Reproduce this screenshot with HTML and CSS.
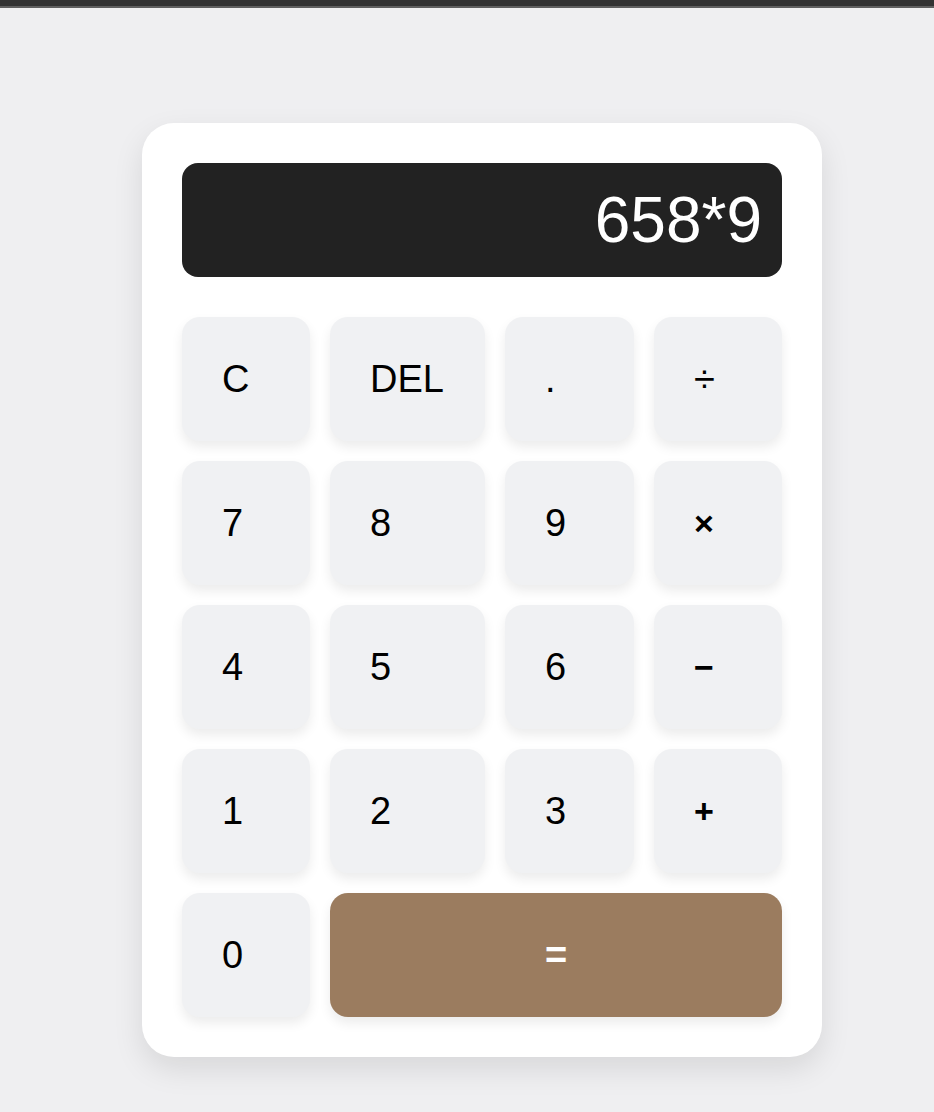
FILE: index.html
```html
<!DOCTYPE html>
<html lang="en">
<head>
    <meta charset="UTF-8">
    <meta name="viewport" content="width=device-width, initial-scale=1.0">
    <title>Calculator</title>
    <link rel="stylesheet" href="styles.css">
</head>
<body>
    <div class="topbar"></div>
    <main class="page">
        <div class="calculator">
            <div class="display" id="display">658*9</div>
            <div class="keys">
                <button class="key">C</button>
                <button class="key">DEL</button>
                <button class="key">.</button>
                <button class="key">÷</button>

                <button class="key">7</button>
                <button class="key">8</button>
                <button class="key">9</button>
                <button class="key op">×</button>

                <button class="key">4</button>
                <button class="key">5</button>
                <button class="key">6</button>
                <button class="key op">−</button>

                <button class="key">1</button>
                <button class="key">2</button>
                <button class="key">3</button>
                <button class="key op">+</button>

                <button class="key">0</button>
                <button class="key equals">=</button>
            </div>
        </div>
    </main>
</body>
</html>
```

FILE: styles.css
```css
* {
    box-sizing: border-box;
}
body {
    font-family: "Liberation Sans", Arial, sans-serif;
    margin: 0;
    padding: 0;
    background-color: #efeff1;
    min-height: 1112px;
}
.topbar {
    height: 8px;
    background: #333;
    border-bottom: 2px solid #606060;
}
.page {
    padding: 115px 0 0 142px;
}
.calculator {
    width: 680px;
    padding: 40px;
    background: #fff;
    border-radius: 32px;
    box-shadow: 0 12px 30px rgba(0, 0, 0, 0.1);
}
.display {
    height: 114px;
    margin-bottom: 40px;
    padding: 0 20px;
    background: #222;
    color: #fff;
    border-radius: 16px;
    font-size: 64px;
    line-height: 114px;
    text-align: right;
}
.keys {
    display: grid;
    grid-template-columns: 128px 155px 129px 128px;
    gap: 20px;
}
.key {
    height: 124px;
    padding: 0 0 0 40px;
    border: none;
    border-radius: 18px;
    background: #f0f1f3;
    color: #000;
    font-family: inherit;
    font-size: 38px;
    text-align: left;
    box-shadow: 0 6px 12px rgba(0, 0, 0, 0.08);
    cursor: pointer;
}
.key.op {
    font-size: 34px;
    font-weight: bold;
}
.key.equals {
    grid-column: span 3;
    padding: 0;
    text-align: center;
    background: #9b7c5f;
    color: #fff;
    font-weight: bold;
}
```
